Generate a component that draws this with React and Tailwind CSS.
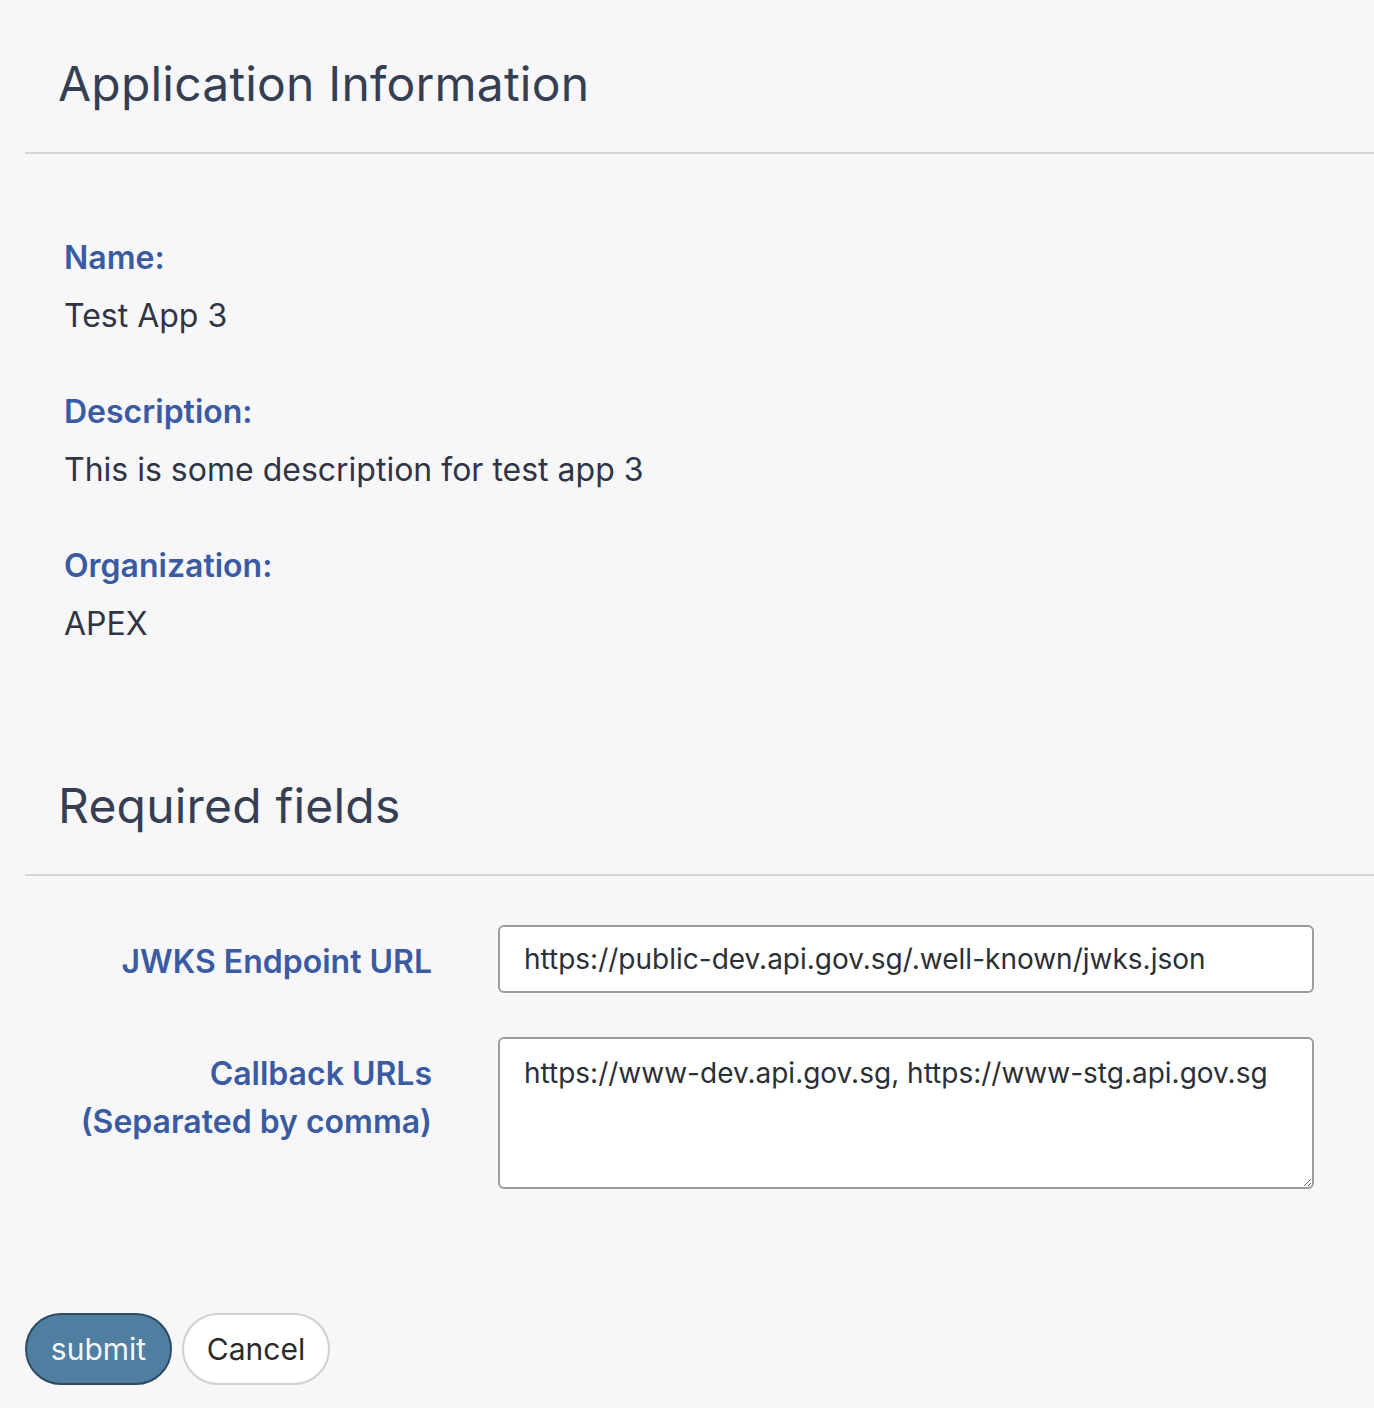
import React from "react";

export default function App() {
  const font = { fontFamily: "Inter, 'Noto Sans', sans-serif" };
  return (
    <div className="min-h-[1408px] w-[1374px] bg-[#f7f7f9] text-[#363f52]" style={font}>
      <div className="pl-[25px] pt-[52px]">
        <h1 className="pl-[33px] text-[48px] leading-[64px] font-normal tracking-[0.2px] text-[#363f52]">Application Information</h1>
        <div className="mt-[36px] h-[2px] bg-[#d6d6d8]" />
        <div className="flex flex-col gap-[48px] pl-[39px] pt-[80px]">
          {[
            ["Name:", "Test App 3"],
            ["Description:", "This is some description for test app 3"],
            ["Organization:", "APEX"],
          ].map(([l, v]) => (
            <div key={l} className="flex flex-col gap-[10px]">
              <div className="text-[32px] leading-[48px] font-semibold text-[#3a5ba2]">{l}</div>
              <div className="text-[32px] leading-[48px] text-[#2f3544]">{v}</div>
            </div>
          ))}
        </div>
        <h2 className="mt-[126px] pl-[33px] text-[48px] leading-[64px] font-normal tracking-[0.2px] text-[#363f52]">Required fields</h2>
        <div className="mt-[36px] h-[2px] bg-[#d6d6d8]" />
        <div className="pt-[49px] pr-[60px]">
          <div className="flex items-center">
            <label className="w-[407px] pt-[6px] text-right text-[32px] font-semibold text-[#3a5ba2]">JWKS Endpoint URL</label>
            <input
              readOnly
              value="https://public-dev.api.gov.sg/.well-known/jwks.json"
              className="ml-[66px] h-[68px] flex-1 rounded-[6px] border-2 border-[#9a9c9e] bg-white px-[24px] text-[28px] text-[#2b2f36] outline-none"
              style={font}
            />
          </div>
          <div className="mt-[44px] flex items-start">
            <label className="w-[407px] pt-[13px] text-right text-[32px] leading-[48px] font-semibold text-[#3a5ba2]">
              Callback URLs
              <br />
              (Separated by comma)
            </label>
            <textarea
              readOnly
              value="https://www-dev.api.gov.sg, https://www-stg.api.gov.sg"
              className="ml-[66px] h-[152px] flex-1 rounded-[6px] border-2 border-[#9a9c9e] bg-white px-[24px] py-[14px] text-[28px] leading-[40px] text-[#2b2f36] outline-none"
              style={font}
            />
          </div>
        </div>
        <div className="mt-[124px] flex gap-[10px]">
          <button className="h-[72px] w-[147px] rounded-full border-2 border-[#2c4a62] bg-[#4f7ea0] text-[30px] text-[#f3f6f9]">submit</button>
          <button className="h-[72px] w-[148px] rounded-full border-2 border-[#d0d0d0] bg-white text-[30px] text-[#2b2b2b]">Cancel</button>
        </div>
      </div>
    </div>
  );
}
